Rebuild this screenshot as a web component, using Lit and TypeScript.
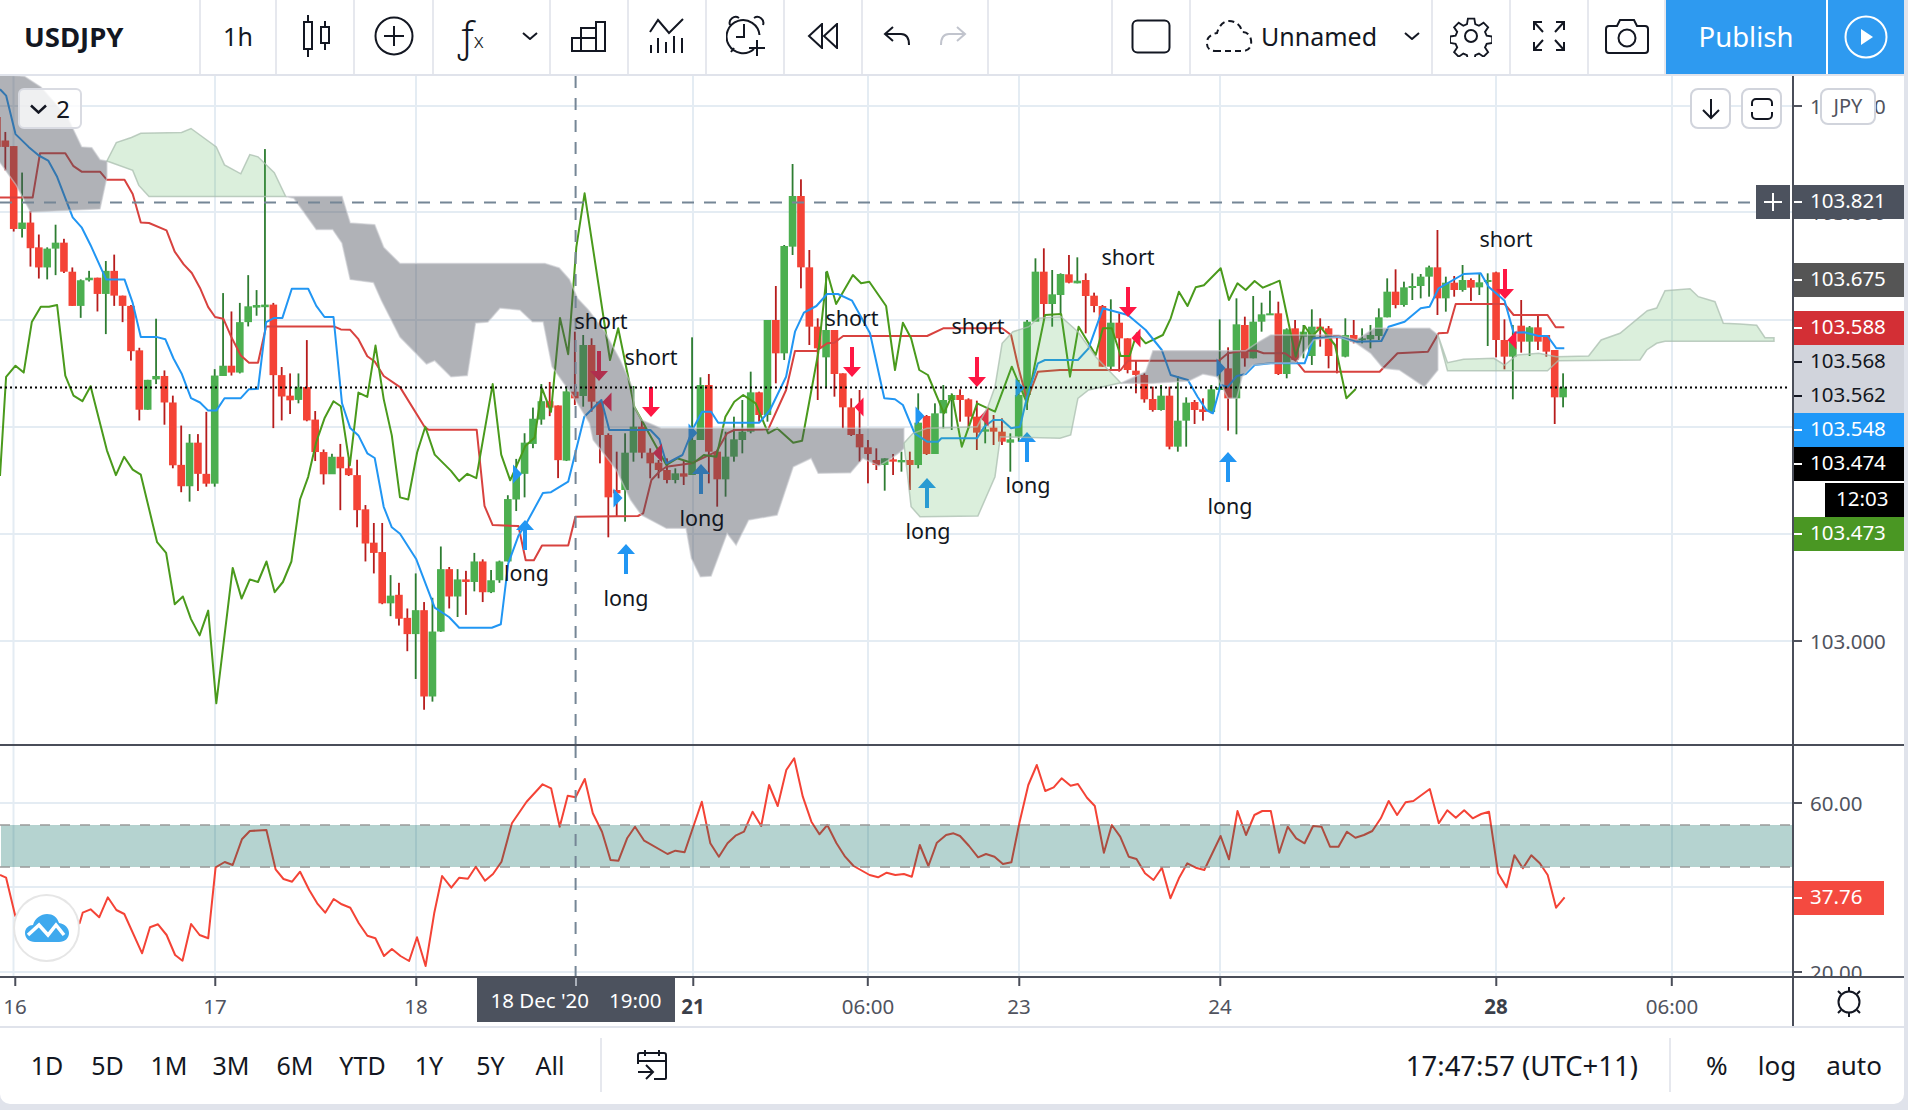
import { LitElement, html, svg, css } from 'lit';
import { customElement } from 'lit/decorators.js';

type Pt = [number, number];
type Scale = (x: number, y: number) => Pt;

// the chart data was read off at a few different scales, each has its own mapping to page px
const a: Scale = (x, y) => [x / 2.45, 70 + y / 2.34];
const b: Scale = (x, y) => [520 + x / 2.8, 150 + y / 3];
const c: Scale = (x, y) => [1060 + x / 2.8, 200 + y / 3];
const d: Scale = (x, y) => [1640 + x / 3, 70 + y / 3];
const e: Scale = (x, y) => [x / 1.633, 730 + y / 3];
const f: Scale = (x, y) => [960 + x / 1.654, 730 + y / 3];

const pts = (s: Scale, flat: number[]): Pt[] => {
  const out: Pt[] = [];
  for (let i = 0; i < flat.length; i += 2) out.push(s(flat[i], flat[i + 1]));
  return out;
};
const line = (p: Pt[], close = false) =>
  'M' + p.map(q => `${q[0].toFixed(1)} ${q[1].toFixed(1)}`).join('L') + (close ? 'Z' : '');

const R = 0;
const G = 1;
type Row = [number, number, number, number, number, number];

const rowsA: Row[] = [
  [-7,110,235,110,180,R],[14,145,235,165,180,R],[34,178,378,178,372,R],[56,240,392,357,372,G],[76,330,460,357,417,R],
  [98,385,488,415,462,R],[118,415,490,418,462,G],[138,362,480,404,418,G],[159,395,475,404,472,R],[179,462,552,472,552,R],
  [199,490,580,492,552,G],[220,470,495,486,492,G],[240,486,565,486,524,R],[262,447,618,470,524,G],[282,432,552,470,528,R],
  [302,528,590,528,552,R],[324,550,680,552,658,R],[344,650,820,656,795,R],[363,725,795,725,795,G],[384,582,735,716,724,G],
  [404,703,830,716,778,R],[424,762,932,778,925,R],[446,832,988,924,974,R],[466,852,1010,872,974,G],[487,852,985,872,945,R],
  [507,800,975,945,968,R],[527,700,975,715,968,G],[549,522,716,692,716,G],[569,565,715,692,708,R],[588,545,710,590,708,G],
  [610,480,600,553,590,G],[630,515,575,550,556,G],[651,185,610,549,555,G],[671,545,838,549,714,R],[691,695,820,714,764,R],
  [712,710,805,762,773,R],[732,710,780,742,772,G],[752,632,822,742,820,R],[774,798,915,818,894,R],[794,888,970,894,946,R],
  [815,898,945,905,946,G],[835,875,1030,905,932,R],[856,910,950,932,948,R],[877,912,1070,948,1030,R],[897,1018,1150,1028,1108,R],
  [917,1060,1178,1106,1130,R],[938,1060,1250,1128,1248,R],[958,1182,1278,1230,1248,G],[980,1200,1300,1228,1284,R],[1000,1260,1360,1282,1320,R],
  [1020,1178,1425,1264,1320,G],[1041,1245,1497,1264,1466,R],[1061,1235,1478,1314,1466,G],[1081,1115,1315,1168,1314,G],[1102,1163,1260,1168,1232,R],
  [1122,1168,1280,1192,1232,G],[1142,1172,1275,1192,1198,R],[1163,1130,1220,1150,1198,G],[1184,1145,1245,1150,1222,R],[1204,1170,1224,1194,1222,G],
  [1224,1148,1200,1150,1194,G],[1244,995,1150,1004,1150,G],[1266,910,1032,950,1005,G],[1286,850,1000,872,945,G],[1306,790,885,816,875,G],
  [1327,735,830,775,818,G],[1348,730,810,775,790,R],[1369,785,955,785,913,R],[1389,740,915,752,914,G],
];

const rowsB: Row[] = [
  [153,545,765,725,745,R],[177,555,770,585,738,G],[200,565,785,585,755,R],[224,755,940,755,855,R],[248,850,1162,855,1042,R],
  [271,905,1098,1020,1030,R],[294,850,1115,908,1020,G],[318,708,935,830,908,G],[341,810,925,830,908,R],[365,895,985,908,940,R],
  [388,930,985,938,960,R],[411,925,1000,960,990,R],[435,955,1000,970,990,G],[458,930,1005,970,980,R],[482,562,975,870,975,G],
  [505,682,870,705,870,G],[529,672,1000,705,905,R],[552,905,1070,905,988,R],[576,845,1040,920,988,G],[599,800,935,868,920,G],
  [623,750,910,845,870,G],[646,665,850,727,845,G],[669,725,815,727,795,R],[693,510,815,510,795,G],[716,408,700,510,610,R],
  [740,285,630,288,610,G],[763,42,315,138,290,G],[787,88,415,138,352,R],[810,300,585,352,530,R],[834,505,750,530,595,R],
  [857,365,715,540,622,G],[881,540,740,540,672,R],[904,670,835,670,772,R],[928,745,858,772,855,R],[951,720,935,852,892,R],
  [975,870,1000,892,912,R],[998,895,960,930,945,R],[1022,925,1022,925,945,G],[1045,912,975,928,935,R],[1069,905,965,930,937,G],
  [1092,905,1020,930,945,R],[1115,730,955,818,945,G],[1139,795,915,798,912,R],[1162,760,912,790,912,G],[1186,705,835,750,790,G],
  [1209,730,840,735,750,G],[1233,718,815,735,750,R],[1256,745,835,748,800,R],[1280,752,900,800,848,R],[1303,790,880,838,845,G],
  [1327,795,885,833,845,R],[1350,805,885,845,875,R],[1374,850,965,868,878,G],[1397,690,875,735,860,G],[1421,510,780,515,735,G],
  [1444,325,510,365,515,G],[1468,295,510,365,462,R],[1491,360,530,433,462,G],[1515,370,490,372,435,G],[1538,315,400,373,398,R],
];

const rowsC: Row[] = [
  [48,172,250,242,250,G],[72,220,400,240,288,R],[95,278,337,287,318,R],[119,315,500,318,500,R],[142,298,510,368,500,G],
  [166,340,515,368,415,R],[189,415,520,415,510,R],[213,482,580,512,525,R],[236,520,608,525,598,R],[260,560,635,597,630,R],
  [283,555,632,587,630,G],[307,560,748,587,740,R],[330,528,755,662,740,G],[353,592,740,608,662,G],[377,600,672,606,630,R],
  [400,595,662,628,636,R],[424,555,640,568,636,G],[447,358,570,562,570,G],[471,442,692,505,595,R],[494,295,703,373,595,G],
  [518,350,500,375,475,R],[541,288,475,365,475,G],[565,308,395,343,365,G],[588,272,345,340,345,G],[612,305,525,340,522,R],
  [635,385,535,388,522,G],[659,360,480,385,480,R],[682,375,475,395,410,G],[706,328,495,380,468,G],[729,355,440,380,388,R],
  [753,378,505,385,468,R],[776,405,520,405,415,R],[799,355,472,405,470,G],[823,360,430,405,425,R],[846,385,430,415,420,G],
  [870,375,445,405,418,G],[893,325,420,352,408,G],[917,235,352,275,352,G],[940,208,325,275,315,R],[964,245,320,262,315,G],
  [987,220,300,258,262,G],[1011,222,295,230,258,G],[1034,197,290,202,230,G],[1058,90,345,202,295,R],[1081,230,335,248,295,G],
  [1105,228,290,248,270,R],[1128,195,275,240,270,G],[1151,235,303,240,263,R],[1175,220,285,247,262,G],[1198,220,438,240,245,G],
  [1222,215,472,217,420,R],[1245,358,508,420,470,R],[1269,375,598,425,470,G],[1292,300,458,377,425,R],[1316,378,468,382,425,G],
  [1339,345,450,382,425,R],[1362,405,470,405,455,R],[1386,450,672,450,592,R],[1409,520,622,562,592,G],
];

const barsOf = (s: Scale, rows: Row[]) =>
  rows.map(r => {
    const i = Math.round((s(r[0], 0)[0] - 13.7) / 8.375);
    return {
      x: 13.7 + 8.375 * i,
      top: s(0, r[1])[1],
      bottom: s(0, r[2])[1],
      open: s(0, r[3])[1],
      close: s(0, r[4])[1],
      up: r[5] === G,
    };
  });
const candles = [...barsOf(a, rowsA), ...barsOf(b, rowsB), ...barsOf(c, rowsC)];

const blue = line([
  ...pts(a, [0,45,15,60,38,150,70,180,95,200,118,212,140,250,178,345,200,368,222,410,260,490,305,490,325,545,345,625,385,625,405,630,425,675,445,710,468,768,490,778,510,797,530,797,550,768,590,768,610,747,632,746,652,590,672,580,692,580,715,512,755,512,775,552,795,578,817,578,838,780,858,838,878,855,900,897,918,908,940,1022,960,1070,980,1085,1020,1145,1065,1258,1100,1280,1125,1305,1205,1305,1227,1297,1245,1155,1270,1090,1290,1060,1330,990,1350,988]),
  ...pts(b, [135,995,180,800,228,750,250,840,365,840,390,868,410,940,455,915,485,835,510,785,535,785,555,818,670,818,700,780,745,680,770,545,795,488,830,468,860,432,890,432,930,452,980,550,1020,745,1050,748,1072,765,1105,850,1140,875,1170,875,1180,865,1280,865,1300,830,1325,810,1350,810,1375,835,1400,830,1420,740,1450,640,1470,630]),
  ...pts(c, [50,480,80,445,120,325,190,345,240,390,285,450,310,525,358,540,385,590,410,630,428,640,450,555,470,560,495,528,520,522,545,495,590,490,685,490,710,415,780,410,830,425,900,423,920,380,965,365,1010,325,1035,320,1060,265,1130,222,1178,220,1200,260,1245,302,1270,398,1300,397,1340,408,1365,408,1390,445,1412,445]),
]);

const red = line([
  ...pts(a, [0,298,80,298,98,195,160,195,180,225,200,238,245,238,262,257,305,257,325,290,345,357,365,358,408,375,428,425,450,455,470,475,490,510,510,555,527,578,547,582,567,625,590,668,610,685,632,685,652,600,818,600,835,607,858,608,878,630,900,670,918,682,940,716,980,742,1040,835,1050,842,1168,842,1187,1020,1207,1065,1270,1067,1288,1147,1308,1147,1328,1113,1392,1113]),
  ...pts(b, [155,1100,330,1098,345,1090,368,990,390,965,410,950,480,940,550,905,580,850,600,840,695,838,745,720,770,603,830,603,860,580,880,578,905,558,1140,558,1185,535,1350,535,1375,555,1395,650,1420,750,1450,665,1512,660]),
  ...pts(c, [170,510,190,482,445,482,470,460,515,452,550,452,570,460,630,460,660,482,685,515,895,515,945,460,1030,455,1060,400,1085,398,1108,312,1245,312,1270,345,1365,345,1388,382,1412,382]),
]);

const lagging = line([
  ...pts(a, [0,950,15,718,38,692,58,708,78,590,100,554,120,554,140,550,160,715,180,762,202,775,222,740,262,890,284,948,304,905,325,935,345,947,385,1105,407,1130,428,1250,448,1232,468,1285,489,1323,510,1265,530,1482,570,1165,592,1237,612,1192,632,1198,653,1150,673,1222,693,1198,714,1150,735,1005,755,952,775,870,795,815,817,775,835,787,857,925,878,755,900,765,920,645,940,770,960,855,980,1000,1000,1005,1022,895,1042,835,1065,900,1105,938,1125,962,1145,945,1167,955,1207,735,1228,900,1250,960,1287,880,1310,860,1328,745,1350,800,1372,580,1392,665,1412,415]),
  ...pts(b, [181,130,252,630,275,535,320,770,410,945,440,925,485,940,515,915,550,920,575,800,600,755,625,735,660,760,695,850,720,835,765,878,790,872,835,610,860,365,885,462,932,375,955,400,978,395,1025,468,1050,660,1072,518,1095,565,1118,660,1142,675,1187,790,1210,735,1237,890,1280,760,1330,785,1377,650,1420,760,1445,625,1470,495,1515,492]),
  ...pts(c, [28,530,52,380,100,465,120,385,145,385,170,468,195,468,215,400,240,430,288,405,310,355,333,275,357,318,380,262,403,256,450,205,473,300,497,250,520,270,545,243,568,263,615,242,660,470,685,378,705,410,730,382,770,435,802,595,828,567]),
]);

const greyClouds = [
  line(pts(a, [-5,10,60,15,100,40,165,110,200,180,225,182,245,210,262,213,262,250,245,325,75,332,40,270,-5,210]), true),
  line([
    ...pts(a, [700,296,838,296,858,358,918,362,940,415,980,453,1335,453,1370,463,1395,490,1415,535,1440,560,1480,610,1520,680,1550,745]),
    ...pts(b, [320,770,340,810,395,835,1075,835,1075,895,1065,905,1040,925,1005,948,960,925,925,968,835,970,815,925,765,950,720,1095,640,1110,605,1185,580,1150,535,1278,505,1280,480,1225,465,1135,410,1135,340,1095,310,1050,270,960,205,870,195,820,150,740,90,650,65,515,35,515,0,480]),
    ...pts(a, [1225,557,1195,590,1165,592,1145,715,1105,718,1065,680,1045,688,980,625,935,540,915,497,858,490,838,405,815,373,775,373,720,300]),
  ], true),
  line(pts(c, [170,550,240,515,260,452,520,452,550,430,590,405,780,405,830,420,880,385,1035,385,1058,405,1058,510,1020,560,985,535,950,510,905,505,870,460,830,430,780,410,710,420,660,488,590,490,540,495,510,530,495,595,470,595,440,530,400,522,360,543,260,550]), true),
];

const greenClouds = [
  line(pts(a, [262,213,285,170,322,158,345,148,445,146,468,137,530,180,550,222,590,243,612,198,632,203,672,240,700,296,632,296,365,296,340,270,325,235]), true),
  line([
    ...pts(b, [1075,880,1100,850,1140,835,1280,830,1310,770,1330,710,1350,580,1380,545,1425,530,1450,505,1515,500]),
    ...pts(c, [50,395,100,470,170,548,130,558,80,570,50,595,30,705,0,715]),
    ...pts(b, [1400,862,1345,860,1330,980,1282,1098,1120,1100,1095,1070]),
  ], true),
  line([
    ...pts(c, [1058,405,1085,488,1130,478,1215,475,1245,495,1280,465,1340,460,1390,470,1480,468,1515,420,1568,400]),
    ...pts(d, [22,722,50,714,75,662,150,656,175,680,225,695,250,760,300,762,350,766,375,803,402,803,402,814,75,814,50,820,20,840,0,870]),
    ...pts(c, [1395,482,1365,512,1085,512]),
  ], true),
];

const rsi = line([
  ...pts(e, [0,435,10,443,25,558,38,540,90,590,130,580,135,548,148,538,162,562,176,502,190,540,203,552,232,670,245,592,258,583,272,615,286,675,298,692,312,582,326,615,340,625,352,412,367,396,380,405,395,328,408,303,435,300,450,418,463,447,477,455,490,425,505,480,518,520,531,548,545,507,558,523,572,533,586,580,600,617,613,625,627,678,640,657,654,678,668,693,681,622,695,708,709,550,722,438,737,473,750,443,764,446,777,410,792,452,805,432,819,395,836,280,860,215,886,163,900,175,914,290,927,197,940,202,955,147,968,250,983,305,997,390,1010,392,1024,325,1037,290,1052,332,1090,372,1103,362,1118,367,1146,215,1160,340,1174,380,1188,340,1201,317,1215,305,1229,245,1243,288,1256,165,1270,228,1284,120,1297,85,1311,200,1325,275,1338,313,1351,285,1366,340,1380,380,1394,408,1420,435,1434,442,1448,428,1462,435,1476,432,1489,440,1502,345,1516,408,1530,338,1545,315,1557,310]),
  ...pts(f, [0,318,15,348,30,382,43,372,57,380,71,402,85,397,98,280,113,165,127,105,141,183,155,172,168,145,183,167,195,162,210,203,223,228,238,368,251,285,265,320,279,380,292,387,306,430,320,450,334,413,348,505,362,445,376,400,390,413,404,420,431,318,445,388,459,243,473,315,487,255,500,243,514,243,528,368,542,290,556,325,570,340,584,288,598,290,612,350,626,350,640,305,654,323,668,315,682,303,696,265,709,213,723,255,737,217,750,213,777,177,792,280,806,241,820,263,834,241,848,265,862,252,875,245,890,430,904,472,917,376,931,415,945,376,959,400,972,435,986,533,1000,502]),
]);

const gridX = [13.5, 215, 416, 693, 868, 1019, 1220, 1496, 1672];
const gridMain = [106, 212, 320, 427, 534, 641];
const gridRsi = [803, 887, 972];

const upArrows: [number, number][] = [[525, 520], [626, 544], [701, 464], [927, 478], [1027, 432], [1228, 452]];
const downArrows: [number, number][] = [[599, 381], [651, 417], [852, 377], [977, 387], [1128, 317], [1505, 299]];
const rightMarks: [number, number][] = [[517.5, 474], [618, 498], [693, 433], [920, 416], [1020, 388], [1221, 368]];
const leftMarks: [number, number][] = [[607, 402], [657.5, 453], [859, 407], [984, 417], [1136, 338], [1512, 340]];
const longTexts: [number, number][] = [[526.5, 572], [626, 597], [702, 517], [928, 530], [1028, 484], [1230, 505]];
const shortTexts: [number, number][] = [[601, 320], [651, 356], [852, 317], [978, 325], [1128, 256], [1506, 238]];

const priceTicks: [string, number][] = [['104.000', 106], ['103.800', 212], ['103.000', 641]];
const priceTags: [string, number, string][] = [
  ['103.675', 263, 'dim'], ['103.588', 311, 'rust'], ['103.568', 345, 'pale'], ['103.562', 379, 'pale'],
  ['103.548', 413, 'sky'], ['103.474', 447, 'ink'], ['103.473', 517, 'leaf'], ['103.821', 185, 'slate'],
];
const rsiTicks: [string, number][] = [['60.00', 803], ['40.00', 887], ['20.00', 972]];
const timeLabels: [string, number, boolean][] = [
  ['16', 15, false], ['17', 215, false], ['18', 416, false], ['21', 693, true], ['06:00', 868, false],
  ['23', 1019, false], ['24', 1220, false], ['28', 1496, true], ['06:00', 1672, false],
];
const ranges: [string, number][] = [
  ['1D', 60], ['5D', 61], ['1M', 62], ['3M', 62], ['6M', 66], ['YTD', 69], ['1Y', 64], ['5Y', 59], ['All', 60],
];

@customElement('app-root')
export class AppRoot extends LitElement {
  static styles = css`
    :host {
      display: block;
      width: 1908px;
      height: 1110px;
      background: #e0e3eb;
      font-family: 'Noto Sans', sans-serif;
      color: #131722;
      overflow: hidden;
    }
    .widget {
      width: 1904px;
      height: 1104px;
      background: #fff;
      border-radius: 0 0 10px 10px;
      display: flex;
      flex-direction: column;
      overflow: hidden;
    }
    .icon {
      fill: none;
      stroke: currentColor;
      stroke-width: 2;
      display: block;
      flex: none;
    }

    /* top bar */
    .top {
      height: 76px;
      flex: none;
      display: flex;
      border-bottom: 2px solid #e0e3eb;
      box-sizing: border-box;
    }
    .cell {
      box-sizing: border-box;
      border-right: 2px solid #e6e8ee;
      display: flex;
      align-items: center;
      justify-content: center;
      font-size: 25px;
      padding-bottom: 2px;
      flex: none;
    }
    .w76 { width: 76px; }
    .w77 { width: 77px; }
    .w78 { width: 78px; }
    .w79 { width: 79px; }
    .nudge { padding-left: 4px; }
    .symbol {
      width: 201px;
      justify-content: flex-start;
      padding-left: 24px;
      font-weight: 700;
      font-size: 27.5px;
    }
    .fxcell {
      width: 117px;
      justify-content: flex-start;
      padding-left: 24px;
    }
    .fx {
      font-size: 40px;
      font-weight: 300;
      line-height: 1;
      width: 64px;
      display: flex;
      align-items: flex-end;
    }
    .fx span {
      font-size: 20px;
      line-height: 1.5;
    }
    .undo {
      width: 126px;
      gap: 28px;
      justify-content: flex-start;
      padding-left: 20px;
    }
    .redo { color: #c1c4cd; }
    .spacer { width: 124px; }
    .save {
      width: 242px;
      justify-content: flex-start;
      padding-left: 14px;
      gap: 8px;
    }
    .save .chev { margin-left: 19px; }
    .publish {
      width: 160px;
      background: #2e9af0;
      color: #fff;
      font-size: 27.5px;
      padding-bottom: 2px;
      box-sizing: border-box;
      flex: none;
      display: flex;
      align-items: center;
      justify-content: center;
    }
    .play {
      width: 76px;
      margin-left: 2px;
      background: #2e9af0;
      color: #fff;
      display: flex;
      align-items: center;
      justify-content: center;
      flex: none;
    }

    /* chart panes */
    .pane {
      display: flex;
      flex: none;
      position: relative;
    }
    .main { height: 668px; }
    .osc {
      height: 230px;
      border-top: 2px solid #4a4e59;
      border-bottom: 2px solid #4a4e59;
    }
    .plot {
      width: 1792px;
      display: block;
      flex: none;
    }
    .axis {
      position: relative;
      width: 112px;
      box-sizing: border-box;
      border-left: 2px solid #4a4e59;
      overflow: hidden;
      flex: none;
      font-size: 20.5px;
      line-height: 34px;
    }
    .tick {
      position: absolute;
      left: 0;
      height: 34px;
      width: 110px;
      padding-left: 16px;
      box-sizing: border-box;
      color: #50535e;
    }
    .tick::before {
      content: '';
      position: absolute;
      left: 0;
      top: 16px;
      width: 8px;
      height: 2px;
      background: currentColor;
    }
    .tag { line-height: 31px; }
    .dim { background: #555; color: #fff; }
    .rust { background: #d32f35; color: #fff; }
    .pale { background: #d1d4dc; color: #131722; }
    .sky { background: #1e98f8; color: #fff; }
    .ink { background: #000; color: #fff; }
    .leaf { background: #4a9723; color: #fff; }
    .slate { background: #4c525e; color: #fff; }
    .coral { background: #f44a40; color: #fff; width: 90px; }
    .count {
      position: absolute;
      left: 31px;
      top: 407px;
      width: 79px;
      height: 34px;
      line-height: 31px;
      padding-left: 11px;
      box-sizing: border-box;
      background: #000;
      color: #fff;
    }
    .jpy {
      position: absolute;
      left: 26px;
      top: 12px;
      width: 56px;
      height: 37px;
      box-sizing: border-box;
      border: 2px solid #d1d4dc;
      border-radius: 8px;
      background: #fff;
      font-size: 20px;
      line-height: 31px;
      text-align: center;
      color: #50535e;
    }
    .legend {
      position: absolute;
      left: 18px;
      top: 12px;
      width: 64px;
      height: 41px;
      box-sizing: border-box;
      border: 2px solid #d9dbe2;
      border-radius: 6px;
      background: rgba(255, 255, 255, 0.8);
      display: flex;
      align-items: center;
      justify-content: center;
      gap: 9px;
      font-size: 24px;
    }
    .legend .icon { stroke-width: 2.5; }
    .btn {
      position: absolute;
      top: 12px;
      width: 41px;
      height: 41px;
      box-sizing: border-box;
      border: 2px solid #d1d4dc;
      border-radius: 8px;
      background: #fff;
      display: flex;
      align-items: center;
      justify-content: center;
    }
    .btn.down { left: 1690px; }
    .btn.fit { left: 1741px; }
    .cross {
      position: absolute;
      left: 1756px;
      top: 109px;
      width: 34px;
      height: 34px;
      background: #4c525e;
      color: #fff;
      display: flex;
      align-items: center;
      justify-content: center;
    }
    .logo {
      position: absolute;
      left: 13px;
      top: 148px;
      width: 67px;
      height: 68px;
      box-sizing: border-box;
      border: 2px solid #e6e6e6;
      border-radius: 50%;
      background: #fff;
      display: flex;
      align-items: center;
      justify-content: center;
    }

    /* time axis */
    .time {
      height: 48px;
      flex: none;
      display: flex;
      border-bottom: 2px solid #e0e3eb;
      box-sizing: content-box;
    }
    .scale {
      position: relative;
      width: 1792px;
      flex: none;
      font-size: 20.5px;
      line-height: 56px;
      color: #50535e;
    }
    .mark {
      position: absolute;
      top: 0;
      transform: translateX(-50%);
    }
    .mark::before {
      content: '';
      position: absolute;
      left: calc(50% - 1px);
      top: 0;
      width: 2px;
      height: 8px;
      background: #4a4e59;
    }
    .mark.strong {
      font-weight: 700;
      color: #3b3f4a;
    }
    .stamp {
      position: absolute;
      left: 477px;
      top: 0;
      width: 198px;
      height: 44px;
      background: #4c525e;
      color: #fff;
      font-size: 20.5px;
      line-height: 44px;
      display: flex;
      justify-content: center;
      gap: 20px;
    }
    .stamp::before {
      content: '';
      position: absolute;
      left: 98px;
      top: 0;
      width: 2px;
      height: 8px;
      background: #aab0ba;
    }
    .corner {
      flex: 1;
      border-left: 2px solid #4a4e59;
      display: flex;
      align-items: center;
      justify-content: center;
    }

    /* bottom bar */
    .bottom {
      flex: 1;
      display: flex;
      align-items: center;
      font-size: 25px;
      padding-bottom: 2px;
    }
    .ranges {
      display: flex;
      width: 602px;
      height: 54px;
      flex: none;
      box-sizing: border-box;
      padding-left: 17px;
      align-items: center;
      border-right: 2px solid #e6e8ee;
    }
    .ranges span {
      text-align: center;
      flex: none;
    }
    .goto {
      margin-left: 35px;
      flex: none;
    }
    .clock {
      margin-left: auto;
      height: 54px;
      display: flex;
      align-items: center;
      padding-right: 31px;
      border-right: 2px solid #e6e8ee;
      font-size: 27.5px;
    }
    .opts {
      width: 233px;
      box-sizing: border-box;
      display: flex;
      align-items: center;
      justify-content: space-between;
      padding: 0 22px 0 35px;
      font-size: 26px;
      flex: none;
    }
  `;

  private plotSvg() {
    return svg`
      <g stroke="#e4ecf3" stroke-width="2">
        ${gridX.map(x => svg`<line x1=${x} x2=${x} y1="76" y2="744" />`)}
        ${gridMain.map(y => svg`<line x1="0" x2="1792" y1=${y} y2=${y} />`)}
      </g>
      ${candles.map(k => svg`
        <rect x=${k.x - 0.9} y=${k.top} width="1.8" height=${k.bottom - k.top} fill=${k.up ? '#2e7d32' : '#b71c1c'} />
        <rect x=${k.x - 3.8} y=${k.open} width="7.6" height=${Math.max(k.close - k.open, 2)} fill=${k.up ? '#4caf50' : '#f44336'} />
      `)}
      <g fill="none" stroke-width="2" stroke-linejoin="round">
        <path d=${red} stroke="#d8423f" />
        <path d=${lagging} stroke="#4a9a1c" />
        <path d=${blue} stroke="#2196f3" />
      </g>
      ${upArrows.map(([x, y]) => svg`<path fill="#2196f3" d="M${x} ${y}l9 10h-7v20h-4v-20h-7z" />`)}
      ${rightMarks.map(([x, y]) => svg`<path fill="#2196f3" d="M${x - 4.5} ${y - 9.5}l9 9.5l-9 9.5z" />`)}
      ${downArrows.map(([x, y]) => svg`<path fill="#ff1744" d="M${x} ${y}l-9 -10h7v-20h4v20h7z" />`)}
      ${leftMarks.map(([x, y]) => svg`<path fill="#ff1744" d="M${x + 4.5} ${y - 9.5}l-9 9.5l9 9.5z" />`)}
      ${greyClouds.map(p => svg`<path d=${p} fill="rgba(76,80,92,.44)" stroke="rgba(200,202,206,.6)" stroke-width="1.5" />`)}
      ${greenClouds.map(p => svg`<path d=${p} fill="rgba(76,175,80,.2)" stroke="rgba(170,190,175,.75)" stroke-width="1.5" />`)}
      <line x1="0" x2="1790" y1="387.5" y2="387.5" stroke="#000" stroke-width="2" stroke-dasharray="2 3" />
      <line x1="0" x2="1756" y1="202.5" y2="202.5" stroke="#758696" stroke-width="2" stroke-dasharray="12 10" />
      <line x1="575.6" x2="575.6" y1="76" y2="744" stroke="#758696" stroke-width="2" stroke-dasharray="12 10" />
      <g font-size="21.5" fill="#131722" text-anchor="middle" dominant-baseline="central">
        ${longTexts.map(([x, y]) => svg`<text x=${x} y=${y}>long</text>`)}
        ${shortTexts.map(([x, y]) => svg`<text x=${x} y=${y}>short</text>`)}
      </g>
    `;
  }

  private oscSvg() {
    return svg`
      <g stroke="#e4ecf3" stroke-width="2">
        ${gridX.map(x => svg`<line x1=${x} x2=${x} y1="746" y2="976" />`)}
        ${gridRsi.map(y => svg`<line x1="0" x2="1792" y1=${y} y2=${y} />`)}
      </g>
      <path d=${rsi} fill="none" stroke="#f44336" stroke-width="2" stroke-linejoin="round" />
      <rect x="1" y="825" width="1791" height="42" fill="rgba(0,105,92,.29)" />
      <g stroke="#9a9a9a" stroke-width="2" stroke-dasharray="10 10" opacity=".75">
        <line x1="0" x2="1792" y1="825" y2="825" />
        <line x1="0" x2="1792" y1="867" y2="867" />
      </g>
      <line x1="575.6" x2="575.6" y1="746" y2="976" stroke="#758696" stroke-width="2" stroke-dasharray="12 10" />
    `;
  }

  render() {
    return html`
      <div class="widget">
        <div class="top">
          <div class="cell symbol">USDJPY</div>
          <div class="cell w76">1h</div>
          <div class="cell w78 nudge">
            <svg class="icon" width="28" height="42" viewBox="0 0 28 42">
              <path d="M5 0v7M5 34v8M22 6v6M22 28v7" /><rect x="1" y="7" width="8" height="27" /><rect x="18" y="12" width="8" height="16" />
            </svg>
          </div>
          <div class="cell w79">
            <svg class="icon" width="40" height="40" viewBox="0 0 40 40">
              <circle cx="20" cy="20" r="18.5" /><path d="M20 10v20M10 20h20" />
            </svg>
          </div>
          <div class="cell fxcell">
            <div class="fx">ƒ<span>x</span></div>
            <svg class="icon" width="16" height="8" viewBox="0 0 16 8"><path d="M1 1l7 6 7-6" /></svg>
          </div>
          <div class="cell w78">
            <svg class="icon" width="36" height="32" viewBox="0 0 36 32">
              <path d="M1 31V18h9v13zM10 31V8h15v23zM25 31V2h9v29zM10 18h15" />
            </svg>
          </div>
          <div class="cell w78">
            <svg class="icon" width="36" height="36" viewBox="0 0 36 36">
              <path d="M1 14L9 2l11 13L34 1M2 35v-8M9 35V20M17 35v-11M25 35V18M33 35V20" />
            </svg>
          </div>
          <div class="cell w78 nudge">
            <svg class="icon" width="42" height="42" viewBox="0 0 42 42">
              <path d="M28 34A16.5 16.5 0 1 1 33.5 20M18 9v13H10M4 10a6 6 0 0 1 9-7M28 3a6 6 0 0 1 9 7M31 25v16M23 33h16M8 33l-3 4" />
            </svg>
          </div>
          <div class="cell w78">
            <svg class="icon" width="32" height="26" viewBox="0 0 32 26">
              <path d="M15 1L2 13l13 12zM30 1L17 13l13 12z" />
            </svg>
          </div>
          <div class="cell undo">
            <svg class="icon" width="28" height="20" viewBox="0 0 28 20">
              <path d="M10 1L2 8l8 7M2 8h16c5 0 8 4 8 11" />
            </svg>
            <svg class="icon redo" width="28" height="20" viewBox="0 0 28 20">
              <path d="M18 1l8 7-8 7M26 8H10c-5 0-8 4-8 11" />
            </svg>
          </div>
          <div class="cell spacer"></div>
          <div class="cell w78">
            <svg class="icon" width="40" height="35" viewBox="0 0 40 35"><rect x="1.5" y="1.5" width="37" height="32" rx="5" /></svg>
          </div>
          <div class="cell save">
            <svg class="icon" width="48" height="34" viewBox="0 0 48 34">
              <path stroke-dasharray="6 4" d="M10 32H38C44 32 47 27 46 21C45 15 41 13 37 13C36 6 30 2 24 2C18 2 14 7 12 14C6 15 1 19 2 25C2 29 5 32 10 32Z" />
            </svg>
            <span>Unnamed</span>
            <svg class="icon chev" width="16" height="8" viewBox="0 0 16 8"><path d="M1 1l7 6 7-6" /></svg>
          </div>
          <div class="cell w78">
            <svg class="icon" width="42" height="42" viewBox="0 0 42 42">
              <circle cx="21" cy="21" r="6" />
              <path d="M17.5 2h7l1 6 4 1.8 5-3.4 5 5-3.4 5 1.8 4 6 1v7l-6 1-1.800 4 3.400 5-5 5-5-3.400-4 1.800-1 6h-7l-1-6-4-1.800-5 3.400-5-5 3.400-5-1.800-4-6-1v-7l6-1 1.800-4-3.400-5 5-5 5 3.400 4-1.800z" transform="translate(1.800 1.800) scale(.92)" />
            </svg>
          </div>
          <div class="cell w78">
            <svg class="icon" width="34" height="32" viewBox="0 0 34 32">
              <path d="M2 10V2h8M2 2l9 10M32 10V2h-8M32 2l-9 10M2 22v8h8M2 30l9-10M32 22v8h-8M32 30l-9-10" />
            </svg>
          </div>
          <div class="cell w77">
            <svg class="icon" width="44" height="36" viewBox="0 0 44 36">
              <path d="M4 8h8l3-6h14l3 6h8a3 3 0 0 1 3 3v21a3 3 0 0 1-3 3H4a3 3 0 0 1-3-3V11a3 3 0 0 1 3-3z" /><circle cx="22" cy="20" r="8.500" />
            </svg>
          </div>
          <div class="publish">Publish</div>
          <div class="play">
            <svg class="icon" width="44" height="44" viewBox="0 0 44 44">
              <circle cx="22" cy="22" r="20.500" /><path d="M17 14l12 8-12 8z" fill="currentColor" stroke="none" />
            </svg>
          </div>
        </div>

        <div class="pane main">
          <svg class="plot" width="1792" height="668" viewBox="0 76 1792 668">${this.plotSvg()}</svg>
          <div class="axis">
            ${priceTicks.map(([t, y]) => html`<div class="tick" style="top:${y - 76 - 17}px">${t}</div>`)}
            ${priceTags.map(([t, y, cls]) => html`<div class="tick tag ${cls}" style="top:${y - 76}px">${t}</div>`)}
            <div class="count">12:03</div>
            <div class="jpy">JPY</div>
          </div>
          <div class="legend">
            <svg class="icon" width="17" height="10" viewBox="0 0 17 10"><path d="M1 1.500l7.500 7 7.500-7" /></svg>
            <span>2</span>
          </div>
          <div class="btn down">
            <svg class="icon" width="20" height="22" viewBox="0 0 20 22"><path d="M10 1v19M2 12l8 8 8-8" /></svg>
          </div>
          <div class="btn fit">
            <svg class="icon" width="24" height="24" viewBox="0 0 24 24">
              <path d="M2 9V6a4 4 0 0 1 4-4h12a4 4 0 0 1 4 4v3M2 15v3a4 4 0 0 0 4 4h12a4 4 0 0 0 4-4v-3" />
            </svg>
          </div>
          <div class="cross">
            <svg class="icon" width="18" height="18" viewBox="0 0 18 18"><path d="M9 0v18M0 9h18" /></svg>
          </div>
        </div>

        <div class="pane osc">
          <svg class="plot" width="1792" height="230" viewBox="0 746 1792 230">${this.oscSvg()}</svg>
          <div class="axis">
            ${rsiTicks.map(([t, y]) => html`<div class="tick" style="top:${y - 746 - 17}px">${t}</div>`)}
            <div class="tick tag coral" style="top:135px">37.76</div>
          </div>
          <div class="logo">
            <svg width="44" height="28" viewBox="0 0 44 28">
              <path fill="#3ea9ee" d="M10 28C4 28 0 24 0 19C0 14 4 11 8 11C10 4 16 0 22 0C28 0 32 3 34 9C40 10 44 14 44 19C44 24 40 28 34 28Z" />
              <path fill="none" stroke="#fff" stroke-width="3.500" d="M3 21L14 11l9 10 8-10 8 10" />
            </svg>
          </div>
        </div>

        <div class="time">
          <div class="scale">
            ${timeLabels.map(([t, x, bold]) => html`<div class="mark ${bold ? 'strong' : ''}" style="left:${x}px">${t}</div>`)}
            <div class="stamp"><span>18 Dec '20</span><span>19:00</span></div>
          </div>
          <div class="corner">
            <svg class="icon" width="30" height="30" viewBox="0 0 30 30">
              <circle cx="15" cy="15" r="10.500" />
              <path d="M15 0v4M15 26v4M4 4l3 3M26 4l-3 3M4 26l3-3M26 26l-3-3" />
            </svg>
          </div>
        </div>

        <div class="bottom">
          <div class="ranges">${ranges.map(([r, w]) => html`<span style="width:${w}px">${r}</span>`)}</div>
          <svg class="icon goto" width="30" height="30" viewBox="0 0 30 30">
            <path d="M1 14V5a2 2 0 0 1 2-2h24a2 2 0 0 1 2 2v23a1 1 0 0 1-1 1h-11M1 11h28M8 0v6M22 0v6M1 22h14M9 15l7 7-7 7" />
          </svg>
          <div class="clock">17:47:57 (UTC+11)</div>
          <div class="opts"><span>%</span><span>log</span><span>auto</span></div>
        </div>
      </div>
    `;
  }
}
